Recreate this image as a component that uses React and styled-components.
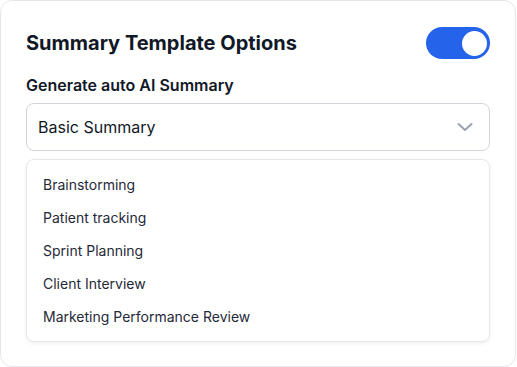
import React from "react";
import styled, { createGlobalStyle } from "styled-components";

const Global = createGlobalStyle`
  html, body { margin: 0; padding: 0; background: #ffffff; }
  body { font-family: Inter, "Noto Sans", sans-serif; -webkit-font-smoothing: antialiased; }
  * { box-sizing: border-box; }
`;

const Card = styled.div`
  width: 516px;
  height: 367px;
  border: 1px solid #e5e7eb;
  border-radius: 12px;
  background: #fff;
  padding: 26px 25px 24px 25px;
  display: flex;
  flex-direction: column;
`;

const Header = styled.div`
  display: flex;
  align-items: center;
  justify-content: space-between;
  height: 32px;
`;

const Title = styled.h2`
  margin: 0;
  font-size: 20px;
  font-weight: 700;
  color: #111827;
`;

const Toggle = styled.button`
  width: 64px;
  height: 32px;
  border: none;
  border-radius: 16px;
  padding: 0 3px 0 0;
  background: ${(p) => (p.$on ? "#2563eb" : "#d1d5db")};
  display: flex;
  align-items: center;
  justify-content: ${(p) => (p.$on ? "flex-end" : "flex-start")};
  cursor: pointer;
`;

const Knob = styled.span`
  width: 25px;
  height: 25px;
  border-radius: 50%;
  background: #fff;
`;

const Label = styled.div`
  margin-top: 16px;
  font-size: 16px;
  line-height: 20px;
  font-weight: 600;
  color: #111827;
`;

const Select = styled.div`
  margin-top: 8px;
  height: 48px;
  border: 1px solid #d1d5db;
  border-radius: 8px;
  padding: 0 16px 0 11px;
  display: flex;
  align-items: center;
  justify-content: space-between;
  font-size: 16px;
  color: #111827;
`;

const Menu = styled.ul`
  list-style: none;
  margin: 8px 0 0 0;
  padding: 8px 0;
  border: 1px solid #e5e7eb;
  border-radius: 8px;
  box-shadow: 0 2px 4px rgba(0, 0, 0, 0.06);
  display: flex;
  flex-direction: column;
`;

const Item = styled.li`
  height: 33px;
  display: flex;
  align-items: center;
  padding-left: 16px;
  font-size: 14px;
  color: #1f2937;
`;

const items = [
  "Brainstorming",
  "Patient tracking",
  "Sprint Planning",
  "Client Interview",
  "Marketing Performance Review",
];

export default function App() {
  return (
    <>
      <Global />
      <Card>
        <Header>
          <Title>Summary Template Options</Title>
          <Toggle $on aria-label="toggle">
            <Knob />
          </Toggle>
        </Header>
        <Label>Generate auto AI Summary</Label>
        <Select>
          <span>Basic Summary</span>
          <svg width="16" height="10" viewBox="0 0 16 10" fill="none">
            <path d="M1.5 2 L8 8 L14.5 2" stroke="#9ca3af" strokeWidth="2" strokeLinecap="round" strokeLinejoin="round" />
          </svg>
        </Select>
        <Menu>
          {items.map((t) => (
            <Item key={t}>{t}</Item>
          ))}
        </Menu>
      </Card>
    </>
  );
}
